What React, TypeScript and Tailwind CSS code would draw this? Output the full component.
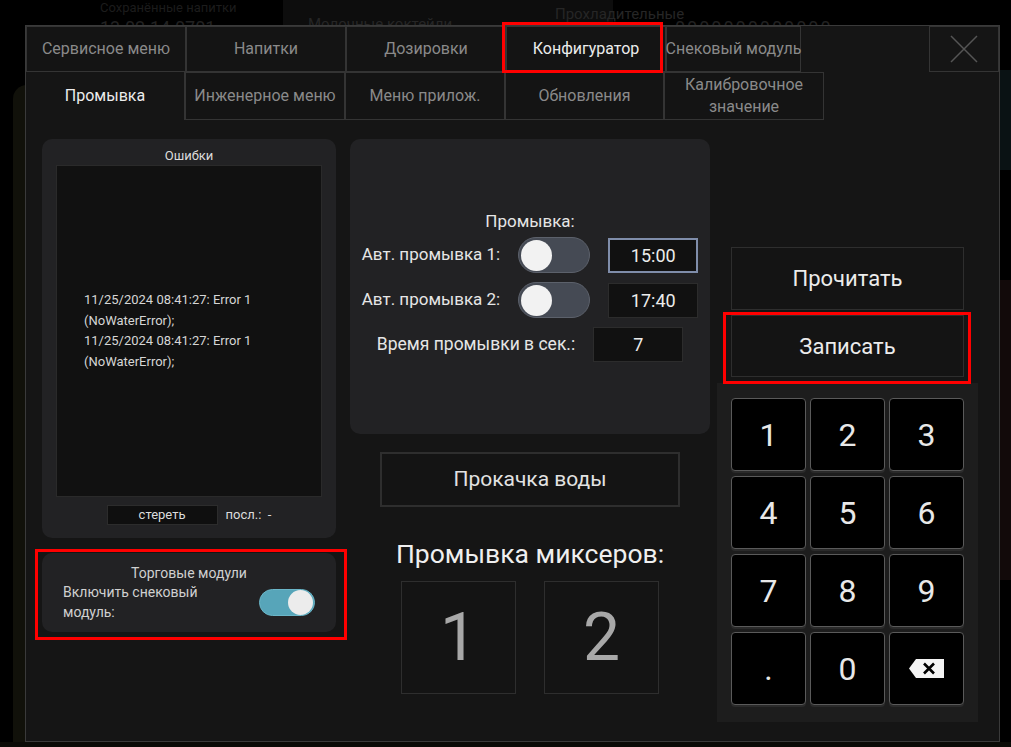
import React from "react";

const topTabs = [
  { label: "Сервисное меню", w: "w-[160px]" },
  { label: "Напитки", w: "w-[160px]" },
  { label: "Дозировки", w: "w-[160px]" },
  { label: "Конфигуратор", w: "w-[160px]", active: true },
  { label: "Снековый модуль", w: "w-[135px]" },
];

const subTabs = [
  { label: "Инженерное меню", w: "w-[160px]" },
  { label: "Меню прилож.", w: "w-[160px]" },
  { label: "Обновления", w: "w-[159px]" },
  { label: "Калибровочное значение", w: "w-[160px]" },
];

const keys = ["1", "2", "3", "4", "5", "6", "7", "8", "9", ".", "0", "del"];

function Toggle({ on }: { on?: boolean }) {
  if (on) {
    return (
      <div className="flex h-[27px] w-[56px] items-center justify-end rounded-full border border-[#6bb6c8] bg-[#57a5b9] pr-[1px]">
        <div className="h-[25px] w-[25px] rounded-full bg-[#ececec]" />
      </div>
    );
  }
  return (
    <div className="flex h-[36px] w-[72px] items-center rounded-full border border-[#5c616b] bg-[#454a54] pl-[2px]">
      <div className="h-[31px] w-[31px] rounded-full bg-[#f2f2f2]" />
    </div>
  );
}

function TimeBox({ value, focused }: { value: string; focused?: boolean }) {
  return (
    <div
      className={
        focused
          ? "flex h-[35px] w-[90px] items-center justify-center border-2 border-[#7f8daa] bg-[#111111] text-[18px] text-[#ececec]"
          : "flex h-[35px] w-[90px] items-center justify-center border border-[#2c2c2c] bg-[#111111] text-[18px] text-[#ececec]"
      }
    >
      {value}
    </div>
  );
}

function Backspace() {
  return (
    <svg width="35" height="19" viewBox="0 0 35 19">
      <polygon points="0,9.5 7,0 35,0 35,19 7,19" fill="#f4f4f4" />
      <path d="M15 4.5 L25 14.5 M25 4.5 L15 14.5" stroke="#000" strokeWidth="2.6" />
    </svg>
  );
}

export default function App() {
  return (
    <div className="relative h-[747px] w-[1011px] overflow-hidden bg-black font-['Roboto',sans-serif]">
      {/* размытый фон приложения */}
      <div className="absolute left-[283px] top-0 h-[25px] w-[330px] bg-[#0d0d0d]" />
      <div className="absolute left-[100px] top-[1px] text-[13px] leading-[14px] text-[#1c1c1c]">Сохранённые напитки</div>
      <div className="absolute left-[100px] top-[14px] text-[18px] text-[#222222]">13.02.14.0701</div>
      <div className="absolute left-[308px] top-[13px] text-[15px] text-[#262626]">Молочные коктейли</div>
      <div className="absolute left-[555px] top-[3px] text-[15px] text-[#262626]">Прохладительные</div>
      <div className="absolute left-[675px] top-[14px] text-[18px] tracking-[2px] text-[#222222]">0000000000000</div>
      <div className="absolute left-[13px] top-[85px] h-[680px] w-[20px] rounded-tl-[14px] bg-[#11110a]" />
      <div className="absolute left-[998px] top-[70px] h-[100px] w-[13px] bg-[#0a1214]" />
      <div className="absolute left-[998px] top-[280px] h-[300px] w-[13px] bg-[#120a0a]" />
      <div className="absolute left-[0px] top-[742px] h-[5px] w-[1011px] bg-[#0b0b07]" />

      {/* диалог */}
      <div className="relative ml-[25px] mt-[25px] flex h-[717px] w-[975px] flex-col border border-[#3a3a3a] bg-[#151515]">
        {/* вкладки, первый ряд */}
        <div className="flex h-[46px]">
          {topTabs.map((t) => (
            <div
              key={t.label}
              className={`${t.w} flex items-center justify-center whitespace-nowrap border border-[#343434] bg-[#141414] text-[16px] ${
                t.active ? "text-[#ececec]" : "text-[#8a8a8a]"
              }`}
            >
              {t.label}
            </div>
          ))}
          <div className="flex-1" />
          <div className="flex w-[70px] items-center justify-center border border-[#343434]">
            <svg width="28" height="28" viewBox="0 0 28 28">
              <path d="M1 1 L27 27 M27 1 L1 27" stroke="#555" strokeWidth="1.5" />
            </svg>
          </div>
        </div>

        {/* вкладки, второй ряд */}
        <div className="flex h-[48px]">
          <div className="flex w-[159px] items-center justify-center border-r border-[#343434] text-[16px] text-[#ececec]">
            Промывка
          </div>
          {subTabs.map((t) => (
            <div
              key={t.label}
              className={`${t.w} flex items-center justify-center border border-[#343434] bg-[#141414] px-[6px] text-center text-[16px] leading-[22px] text-[#8a8a8a]`}
            >
              {t.label}
            </div>
          ))}
        </div>

        {/* содержимое */}
        <div className="flex flex-1">
          {/* левая колонка */}
          <div className="ml-[16px] mt-[19px] flex w-[294px] flex-col">
            <div className="flex h-[399px] flex-col rounded-[10px] bg-[#222224] px-[14px]">
              <div className="pt-[7px] text-center text-[13px] leading-[19px] text-[#dcdcdc]">Ошибки</div>
              <div className="flex h-[332px] flex-col justify-center border border-[#2a2a2a] bg-[#111111] pl-[27px] text-[13px] leading-[20.5px] text-[#d6d6d6]">
                <div>11/25/2024 08:41:27: Error 1</div>
                <div>(NoWaterError);</div>
                <div>11/25/2024 08:41:27: Error 1</div>
                <div>(NoWaterError);</div>
              </div>
              <div className="mt-[8px] flex items-center justify-center gap-[8px] text-[13px] text-[#dcdcdc]">
                <div className="flex h-[20px] w-[111px] items-center justify-center border border-[#2c2c2c] bg-[#0f0f0f]">
                  стереть
                </div>
                <div>посл.:&nbsp;&nbsp;-</div>
              </div>
            </div>

            <div className="mt-[15px] flex h-[79px] flex-col rounded-[10px] bg-[#222224] px-[21px] pt-[11px]">
              <div className="text-center text-[14px] leading-[18px] text-[#d0d0d0]">Торговые модули</div>
              <div className="flex items-center justify-between">
                <div className="text-[14px] leading-[20px] text-[#d0d0d0]">
                  Включить снековый
                  <br />
                  модуль:
                </div>
                <Toggle on />
              </div>
            </div>
          </div>

          {/* средняя колонка */}
          <div className="ml-[14px] mt-[19px] flex w-[360px] flex-col items-center">
            <div className="flex h-[295px] w-[360px] flex-col items-center justify-center rounded-[10px] bg-[#222224] text-[17px] text-[#e6e6e6]">
              <div className="leading-[20px]">Промывка:</div>
              <div className="mt-[6px] flex items-center gap-[18px]">
                <span>Авт. промывка 1:</span>
                <Toggle />
                <TimeBox value="15:00" focused />
              </div>
              <div className="mt-[9px] flex items-center gap-[18px]">
                <span>Авт. промывка 2:</span>
                <Toggle />
                <TimeBox value="17:40" />
              </div>
              <div className="mt-[9px] flex items-center gap-[18px]">
                <span className="text-[17.5px]">Время промывки в сек.:</span>
                <TimeBox value="7" />
              </div>
            </div>

            <div className="mt-[18px] flex h-[55px] w-[300px] items-center justify-center border-2 border-[#2e2e2e] bg-[#141414] text-[21px] text-[#e2e2e2]">
              Прокачка воды
            </div>

            <div className="mt-[31px] text-[26.5px] leading-[32px] text-[#efefef]">Промывка миксеров:</div>

            <div className="mt-[11px] flex gap-[28px]">
              {["1", "2"].map((n) => (
                <div
                  key={n}
                  className="flex h-[113px] w-[115px] items-center justify-center border border-[#2e2e2e] bg-[#141414] text-[66px] text-[#a8a8a8]"
                >
                  {n}
                </div>
              ))}
            </div>
          </div>

          {/* правая колонка */}
          <div className="ml-[7px] flex w-[261px] flex-col">
            <div className="ml-[14px] mt-[127px] flex h-[63px] w-[233px] items-center justify-center border border-[#2e2e2e] bg-[#141414] text-[22px] text-[#ececec]">
              Прочитать
            </div>
            <div className="ml-[14px] mt-[5px] flex h-[62px] w-[233px] items-center justify-center border border-[#2e2e2e] bg-[#141414] text-[22px] text-[#ececec]">
              Записать
            </div>
            <div className="mt-[6px] grid h-[339px] grid-cols-[75px_75px_75px] content-start gap-x-[4px] gap-y-[5px] bg-[#1d1d1d] pl-[14px] pt-[15px]">
              {keys.map((k) => (
                <div
                  key={k}
                  className="flex h-[73px] items-center justify-center rounded-[4px] border border-[#5a5a5a] bg-black text-[32px] text-[#e8e8e8] shadow-[0_2px_0_#2a2a2a]"
                >
                  {k === "del" ? <Backspace /> : k}
                </div>
              ))}
            </div>
          </div>
        </div>
      </div>

      {/* красные рамки-пометки */}
      <div className="pointer-events-none absolute left-[502px] top-[22px] h-[51px] w-[161px] border-[3px] border-[#ff0000]" />
      <div className="pointer-events-none absolute left-[35px] top-[549px] h-[91px] w-[312px] border-[3px] border-[#ff0000]" />
      <div className="pointer-events-none absolute left-[723px] top-[312px] h-[72px] w-[248px] border-[3px] border-[#ff0000]" />
    </div>
  );
}
